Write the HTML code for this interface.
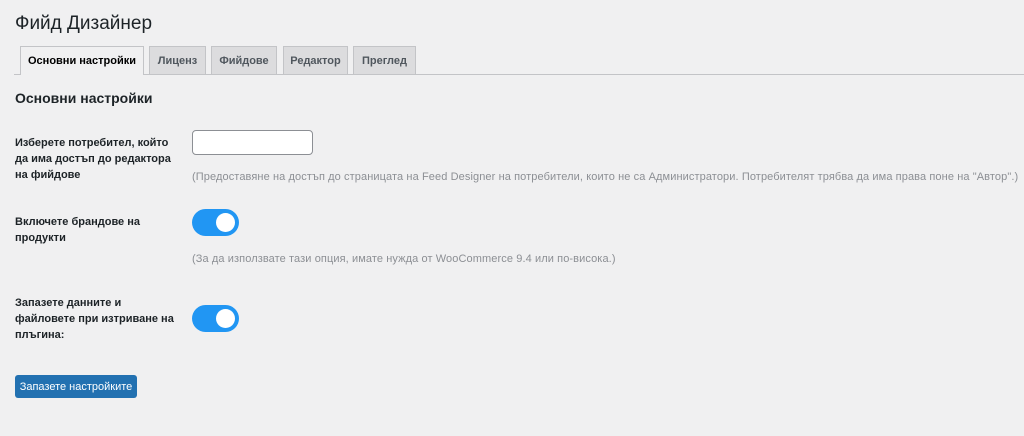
<!DOCTYPE html>
<html><head><meta charset="utf-8"><style>
body{margin:0;width:1024px;height:436px;background:#f0f0f1;font-family:"Liberation Sans",sans-serif;color:#1d2327;position:relative;overflow:hidden}
.a{position:absolute;white-space:nowrap}
h1{position:absolute;left:15px;top:13px;margin:0;font-size:19px;font-weight:400}
.tabline{position:absolute;left:14px;right:0;top:74px;border-top:1px solid #c3c4c7}
.tab{position:absolute;top:46px;height:28px;box-sizing:border-box;border:1px solid #c3c4c7;border-bottom:none;background:#dcdcde;font-size:11px;font-weight:bold;color:#50575e;text-align:center;line-height:28px}
.tab.on{background:#f0f0f1;color:#000;height:29px}
.lbl{position:absolute;left:15px;font-size:11px;font-weight:bold;line-height:16px;color:#1d2327}
.desc{position:absolute;left:192px;font-size:11px;color:#8c8f94;white-space:nowrap;letter-spacing:0.1px}
.tg{position:absolute;left:192px;width:47px;height:27px;border-radius:14px;background:#2196f3}
.tg:after{content:"";position:absolute;right:4px;top:4px;width:19px;height:19px;border-radius:50%;background:#fff}
</style></head><body>
<h1>Фийд Дизайнер</h1>
<div class="tabline"></div>
<div class="tab on" style="left:20px;width:124px">Основни настройки</div>
<div class="tab" style="left:149px;width:57px">Лиценз</div>
<div class="tab" style="left:211px;width:66px">Фийдове</div>
<div class="tab" style="left:283px;width:65px">Редактор</div>
<div class="tab" style="left:353px;width:63px">Преглед</div>
<div class="a" style="left:15px;top:90px;font-size:14px;font-weight:bold">Основни настройки</div>
<div class="lbl" style="top:135px">Изберете потребител, който<br>да има достъп до редактора<br>на фийдове</div>
<div class="a" style="left:192px;top:130px;width:121px;height:25px;box-sizing:border-box;background:#fff;border:1px solid #8c8f94;border-radius:4px"></div>
<div class="desc" style="top:171px">(Предоставяне на достъп до страницата на Feed Designer на потребители, които не са Администратори. Потребителят трябва да има права поне на "Автор".)</div>
<div class="lbl" style="top:214px">Включете брандове на<br>продукти</div>
<div class="tg" style="top:209px"></div>
<div class="desc" style="top:253px">(За да използвате тази опция, имате нужда от WooCommerce 9.4 или по-висока.)</div>
<div class="lbl" style="top:295px">Запазете данните и<br>файловете при изтриване на<br>плъгина:</div>
<div class="tg" style="top:305px"></div>
<div class="a" style="left:15px;top:375px;width:122px;height:23px;background:#2271b1;border-radius:3px;color:#fff;font-size:11px;line-height:24px;text-align:center">Запазете настройките</div>
</body></html>
